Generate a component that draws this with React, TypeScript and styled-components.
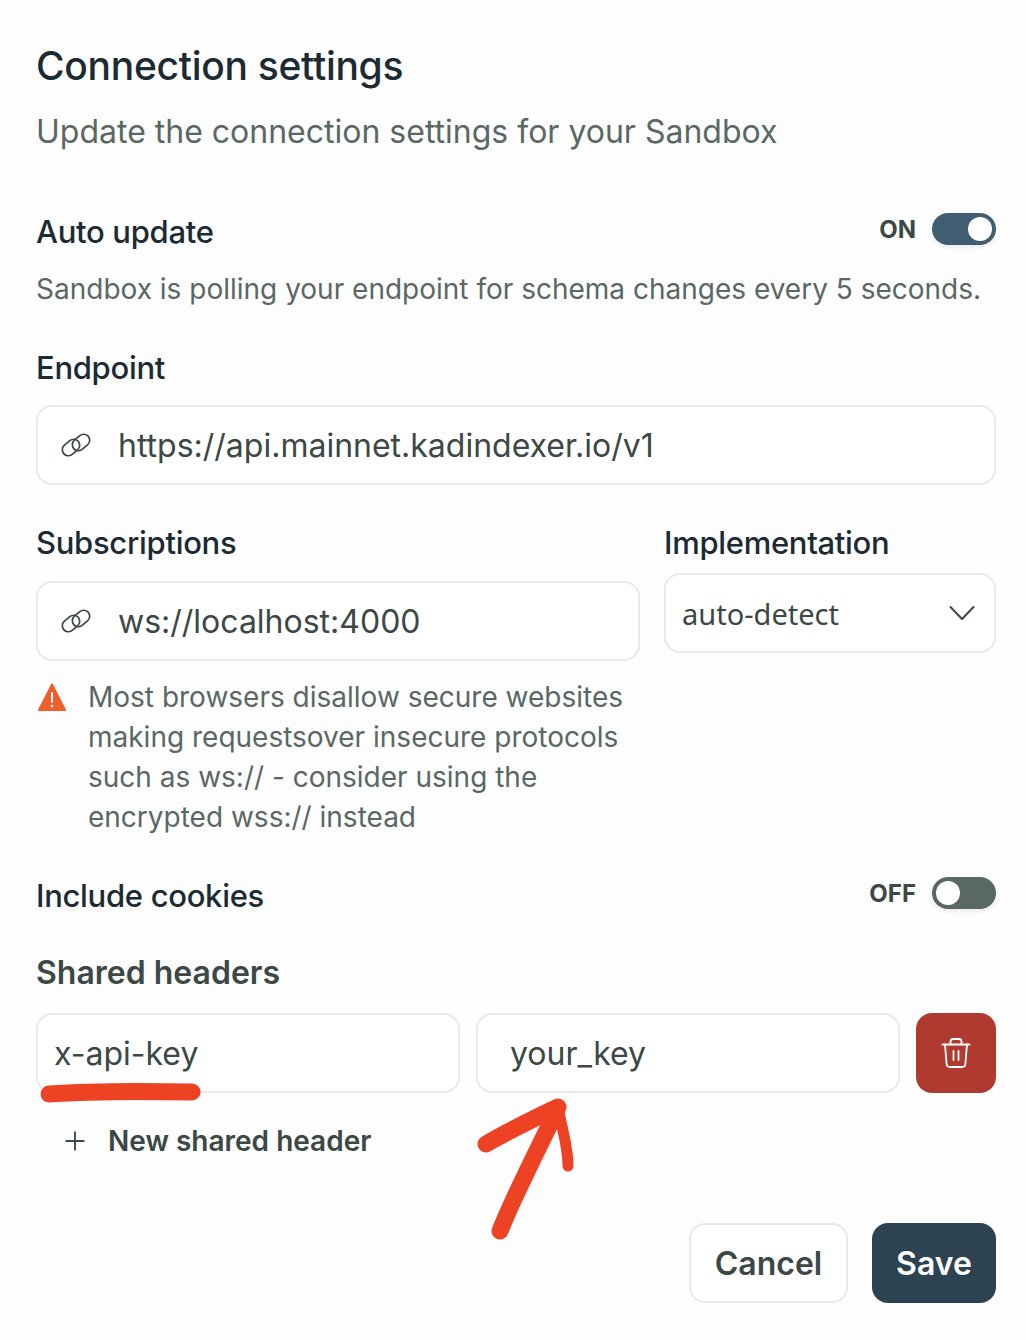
import styled, { createGlobalStyle } from 'styled-components';
import { Plus } from 'lucide-react';

const GlobalStyle = createGlobalStyle`
  html, body {
    margin: 0;
    padding: 0;
    background: #fdfdfd;
  }
`;

const StyledPage = styled.div`
  position: relative;
  box-sizing: border-box;
  width: 1026px;
  height: 1340px;
  padding: 40px 30px 0 36px;
  font-family: Inter, "Liberation Sans", sans-serif;
  overflow: hidden;
`;

const StyledTitle = styled.h1`
  margin: 0;
  height: 52px;
  font-size: 39px;
  line-height: 52px;
  font-weight: 500;
  letter-spacing: -0.3px;
  color: #1b2a33;
`;

const StyledSubtitle = styled.p`
  margin: 14px 0 0;
  height: 52px;
  font-size: 32px;
  line-height: 52px;
  font-weight: 400;
  color: #5a6864;
`;

const StyledRow = styled.div<{ $top: number }>`
  display: flex;
  align-items: flex-start;
  justify-content: space-between;
  margin-top: ${(p) => p.$top}px;
  height: 40px;
`;

const StyledLabel = styled.h3<{ $top?: number }>`
  margin: ${(p) => p.$top ?? 0}px 0 0;
  height: 40px;
  font-size: 31px;
  line-height: 40px;
  font-weight: 500;
  letter-spacing: -0.3px;
  color: #1b2a33;
`;

const StyledSectionLabel = styled.h3`
  margin: 37px 0 0;
  height: 40px;
  font-size: 32px;
  line-height: 40px;
  font-weight: 600;
  color: #3c4845;
`;

const StyledSwitchGroup = styled.div`
  display: flex;
  align-items: center;
  gap: 16px;
  margin-top: 1px;
`;

const StyledSwitchText = styled.span`
  font-size: 24px;
  font-weight: 700;
  color: #3c4845;
`;

const StyledSwitch = styled.div<{ $on: boolean }>`
  display: flex;
  align-items: center;
  justify-content: ${(p) => (p.$on ? 'flex-end' : 'flex-start')};
  box-sizing: border-box;
  width: 64px;
  height: 32px;
  padding: 0 4px;
  border-radius: 16px;
  background: ${(p) => (p.$on ? '#415d72' : '#5a6864')};
  box-shadow: 0 2px 4px rgba(0, 0, 0, 0.08);
`;

const StyledKnob = styled.div`
  width: 24px;
  height: 24px;
  border-radius: 50%;
  background: #ffffff;
`;

const StyledHint = styled.p`
  margin: 17px 0 0;
  height: 40px;
  font-size: 28px;
  line-height: 40px;
  color: #5a6864;
  white-space: nowrap;
`;

const StyledField = styled.div<{ $width?: number; $top?: number; $inset: number }>`
  display: flex;
  align-items: center;
  box-sizing: border-box;
  width: ${(p) => (p.$width ? `${p.$width}px` : '100%')};
  height: 80px;
  margin-top: ${(p) => p.$top ?? 0}px;
  padding: 0 16px 0 ${(p) => p.$inset}px;
  gap: 26px;
  background: #ffffff;
  border: 2px solid #e9e9e9;
  border-radius: 16px;
  font-size: 32px;
  color: #3c4845;
  white-space: nowrap;
`;

const StyledLinkIcon = styled.svg`
  flex-shrink: 0;
  width: 32px;
  height: 28px;
`;

const StyledColumns = styled.div`
  display: flex;
  gap: 24px;
  margin-top: 38px;
`;

const StyledLeftColumn = styled.div`
  display: flex;
  flex-direction: column;
  width: 604px;
`;

const StyledRightColumn = styled.div`
  display: flex;
  flex-direction: column;
  width: 332px;
`;

const StyledSelect = styled.div`
  display: flex;
  align-items: center;
  justify-content: space-between;
  box-sizing: border-box;
  height: 80px;
  margin-top: 10px;
  padding: 0 19px 0 16px;
  background: #ffffff;
  border: 2px solid #e9e9e9;
  border-radius: 16px;
  font-family: "Noto Sans", sans-serif;
  font-size: 29px;
  color: #3c4845;
`;

const StyledWarning = styled.div`
  display: flex;
  gap: 21px;
  margin-top: 16px;
`;

const StyledWarningIcon = styled.svg`
  flex-shrink: 0;
  width: 31px;
  height: 30px;
  margin-top: 6px;
`;

const StyledWarningText = styled.p`
  margin: 0;
  font-size: 28px;
  line-height: 40px;
  color: #5a6864;
`;

const StyledHeaderRow = styled.div`
  display: flex;
  gap: 16px;
  margin-top: 20px;
`;

const StyledDeleteButton = styled.button`
  display: flex;
  align-items: center;
  justify-content: center;
  flex-shrink: 0;
  width: 80px;
  height: 80px;
  padding: 0;
  border: none;
  border-radius: 16px;
  background: #b03a30;
`;

const StyledAddRow = styled.div`
  display: flex;
  align-items: center;
  gap: 18px;
  height: 40px;
  margin-top: 28px;
  padding-left: 24px;
  font-size: 28px;
  font-weight: 600;
  color: #3c4845;
`;

const StyledFooter = styled.div`
  display: flex;
  justify-content: flex-end;
  gap: 24px;
  margin-top: 62px;
`;

const StyledButton = styled.button<{ $primary?: boolean }>`
  box-sizing: border-box;
  width: ${(p) => (p.$primary ? 124 : 159)}px;
  height: 80px;
  padding: 0;
  border: ${(p) => (p.$primary ? 'none' : '2px solid #e9e9e9')};
  border-radius: 16px;
  background: ${(p) => (p.$primary ? '#2d4352' : '#ffffff')};
  color: ${(p) => (p.$primary ? '#ffffff' : '#3c4845')};
  font-family: inherit;
  font-size: 32px;
  font-weight: 600;
`;

const StyledAnnotation = styled.svg`
  position: absolute;
  left: 0;
  top: 0;
  width: 1026px;
  height: 1340px;
  pointer-events: none;
`;

const LinkIcon = () => (
  <StyledLinkIcon viewBox="0 0 32 28" fill="none" stroke="#3c4845" strokeWidth="1.7">
    <rect x="1.500" y="10.500" width="19" height="12" rx="6" transform="rotate(-40 11 16.500)" />
    <rect x="11.500" y="5.500" width="19" height="12" rx="6" transform="rotate(-40 21 11.500)" />
  </StyledLinkIcon>
);

const App = () => {
  return (
    <StyledPage>
      <GlobalStyle />
      <StyledTitle>Connection settings</StyledTitle>
      <StyledSubtitle>Update the connection settings for your Sandbox</StyledSubtitle>

      <StyledRow $top={54}>
        <StyledLabel>Auto update</StyledLabel>
        <StyledSwitchGroup>
          <StyledSwitchText>ON</StyledSwitchText>
          <StyledSwitch $on>
            <StyledKnob />
          </StyledSwitch>
        </StyledSwitchGroup>
      </StyledRow>
      <StyledHint>Sandbox is polling your endpoint for schema changes every 5 seconds.</StyledHint>

      <StyledLabel $top={39}>Endpoint</StyledLabel>
      <StyledField $top={17} $inset={22}>
        <LinkIcon />
        https://api.mainnet.kadindexer.io/v1
      </StyledField>

      <StyledColumns>
        <StyledLeftColumn>
          <StyledLabel>Subscriptions</StyledLabel>
          <StyledField $top={18} $inset={22}>
            <LinkIcon />
            ws://localhost:4000
          </StyledField>
          <StyledWarning>
            <StyledWarningIcon viewBox="0 0 31 30">
              <path d="M16 1.500 L29 27 H3 Z" fill="#ee5f2b" stroke="#ee5f2b" strokeWidth="2" strokeLinejoin="round" />
              <path d="M16 10 V19" stroke="#ffffff" strokeWidth="2" strokeLinecap="round" />
              <circle cx="16" cy="23" r="1.300" fill="#ffffff" />
            </StyledWarningIcon>
            <StyledWarningText>
              Most browsers disallow secure websites
              <br />
              making requestsover insecure protocols
              <br />
              such as ws:// - consider using the
              <br />
              encrypted wss:// instead
            </StyledWarningText>
          </StyledWarning>
        </StyledLeftColumn>
        <StyledRightColumn>
          <StyledLabel>Implementation</StyledLabel>
          <StyledSelect>
            auto-detect
            <svg width="26" height="16" viewBox="0 0 26 16" fill="none" stroke="#3c4845" strokeWidth="2" strokeLinecap="round" strokeLinejoin="round">
              <path d="M1.500 2 L13 14 L24.500 2" />
            </svg>
          </StyledSelect>
        </StyledRightColumn>
      </StyledColumns>

      <StyledRow $top={39}>
        <StyledLabel>Include cookies</StyledLabel>
        <StyledSwitchGroup>
          <StyledSwitchText>OFF</StyledSwitchText>
          <StyledSwitch $on={false}>
            <StyledKnob />
          </StyledSwitch>
        </StyledSwitchGroup>
      </StyledRow>

      <StyledSectionLabel>Shared headers</StyledSectionLabel>
      <StyledHeaderRow>
        <StyledField $width={424} $inset={16}>x-api-key</StyledField>
        <StyledField $width={424} $inset={32}>your_key</StyledField>
        <StyledDeleteButton aria-label="Delete header">
          <svg width="30" height="30" viewBox="0 0 30 30" fill="none" stroke="#ffffff" strokeWidth="1.800" strokeLinecap="round" strokeLinejoin="round">
            <path d="M1.500 6.500 H28.500" />
            <path d="M4 6.500 L5.600 26 C5.800 28 6.800 29 8.800 29 H21.200 C23.200 29 24.200 28 24.400 26 L26 6.500" />
            <path d="M9.500 6.500 V3.500 C9.500 2 10.500 1 12 1 H18 C19.500 1 20.500 2 20.500 3.500 V6.500" />
            <path d="M12.500 13 V22 M17.500 13 V22" />
          </svg>
        </StyledDeleteButton>
      </StyledHeaderRow>
      <StyledAddRow>
        <Plus size={30} strokeWidth={1.5} color="#3c4845" />
        New shared header
      </StyledAddRow>

      <StyledFooter>
        <StyledButton>Cancel</StyledButton>
        <StyledButton $primary>Save</StyledButton>
      </StyledFooter>

      <StyledAnnotation viewBox="0 0 1026 1340" fill="none" stroke="#ee4225" strokeLinecap="round" strokeLinejoin="round">
        <path d="M49 1094 C90 1091 140 1091 192 1092" strokeWidth="17" />
        <path d="M500 1231 C512 1200 535 1155 556 1112" strokeWidth="17" />
        <path d="M486 1144 C510 1130 535 1118 558 1107" strokeWidth="17" />
        <path d="M558 1107 C562 1130 568 1145 568 1166" strokeWidth="11" />
      </StyledAnnotation>
    </StyledPage>
  );
};

export default App;
